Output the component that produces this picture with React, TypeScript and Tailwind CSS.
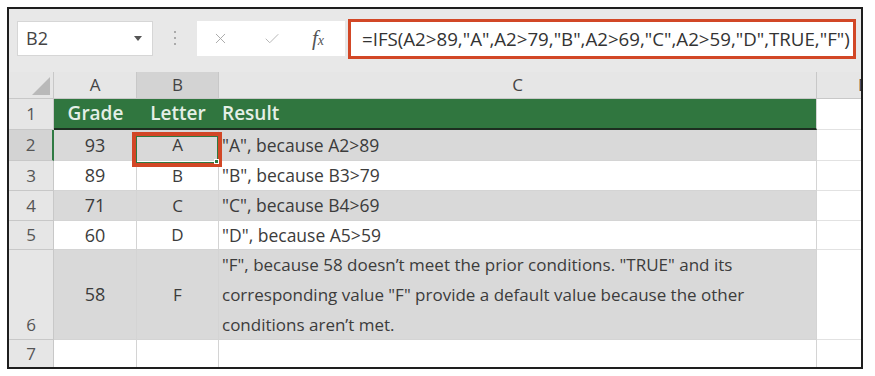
import { X, Check } from 'lucide-react'

const cols = ['A', 'B', 'C']

interface Row {
  n: number
  h: string
  grade: string
  letter: string
  result: string
  band: boolean
}

const rows: Row[] = [
  { n: 2, h: 'h-[31px]', grade: '93', letter: 'A', result: '"A", because A2>89', band: true },
  { n: 3, h: 'h-[30px]', grade: '89', letter: 'B', result: '"B", because B3>79', band: false },
  { n: 4, h: 'h-[30px]', grade: '71', letter: 'C', result: '"C", because B4>69', band: true },
  { n: 5, h: 'h-[29px]', grade: '60', letter: 'D', result: '"D", because A5>59', band: false },
]

const sixth =
  '"F", because 58 doesn\u2019t meet the prior conditions. "TRUE" and its corresponding value "F" provide a default value because the other conditions aren\u2019t met.'

export default function App() {
  return (
    <div className="w-[875px] h-[376px] bg-white p-[7px]">
      <div className="w-[856px] h-[362px] border-2 border-[#1e1e1e] bg-[#e8e8e8] flex flex-col overflow-hidden font-['Open_Sans',sans-serif] text-[17px] text-[#3c3c3c]">
        {/* formula bar */}
        <div className="h-[63px] shrink-0 flex items-start pl-[8px] pt-[11px]">
          <div className="w-[136px] h-[35px] mt-[1px] bg-white border border-[#d6d6d6] flex items-center justify-between pl-[8px] pr-[10px]">
            <span className="text-[18px] text-[#444]">B2</span>
            <svg width="8" height="5" viewBox="0 0 8 5">
              <polygon points="0,0 8,0 4,5" fill="#555" />
            </svg>
          </div>
          <div className="w-[44px] h-[35px] flex flex-col items-center justify-center gap-[4px]">
            <span className="w-[2px] h-[2px] bg-[#aaa]" />
            <span className="w-[2px] h-[2px] bg-[#aaa]" />
            <span className="w-[2px] h-[2px] bg-[#aaa]" />
          </div>
          <div className="w-[148px] h-[35px] mt-[1px] bg-white flex items-center">
            <X size={17} strokeWidth={1.3} className="ml-[15px] text-[#a5a5a5]" />
            <Check size={18} strokeWidth={1.3} className="ml-[34px] text-[#b5b5b5]" />
            <span className="ml-[31px] font-['Liberation_Serif',serif] italic text-[21px] text-[#555] leading-none">
              f<span className="text-[14px]">x</span>
            </span>
          </div>
          <div className="ml-[3px] w-[508px] h-[40px] -mt-[1px] bg-white border-[3px] border-[#d24726] flex items-center pl-[11px] text-[18.7px] text-[#333] whitespace-nowrap">
            =IFS(A2&gt;89,"A",A2&gt;79,"B",A2&gt;69,"C",A2&gt;59,"D",TRUE,"F")
          </div>
        </div>

        {/* sheet */}
        <div className="grid grid-cols-[45px_83px_82px_598px_44px]">
          {/* column headers */}
          <div className="h-[27px] bg-[#e6e6e6] border-r border-b border-[#c8c8c8] flex items-end justify-end pr-[3px] pb-[3px]">
            <svg width="18" height="18" viewBox="0 0 18 18">
              <polygon points="18,0 18,18 0,18" fill="#b9b9b9" />
            </svg>
          </div>
          {cols.map(c => (
            <div
              key={c}
              className={
                c === 'B'
                  ? 'h-[27px] bg-[#d3d3d3] border-r border-b border-[#c8c8c8] flex items-center justify-center text-[#444]'
                  : 'h-[27px] bg-[#e6e6e6] border-r border-b border-[#c8c8c8] flex items-center justify-center text-[#444]'
              }
            >
              {c}
            </div>
          ))}
          <div className="h-[27px] bg-[#e6e6e6] border-b border-[#c8c8c8] overflow-hidden pl-[41px] flex items-center text-[#444]">
            D
          </div>

          {/* row 1 */}
          <div className="h-[31px] bg-[#e6e6e6] border-r border-b border-[#c8c8c8] flex items-center justify-center text-[#555]">1</div>
          <div className="h-[31px] bg-[#30763f] border-b-2 border-[#1c2e20] flex items-center justify-center text-[19px] font-semibold text-[#e4efe6]">Grade</div>
          <div className="h-[31px] bg-[#30763f] border-b-2 border-[#1c2e20] flex items-center justify-center text-[19px] font-semibold text-[#e4efe6]">Letter</div>
          <div className="h-[31px] bg-[#30763f] border-b-2 border-[#1c2e20] border-r border-r-[#d4d4d4] flex items-center pl-[3px] text-[19px] font-semibold text-[#e4efe6]">Result</div>
          <div className="h-[31px] bg-white border-b border-[#e2e2e2]" />

          {/* rows 2-5 */}
          {rows.map(r => {
            const bg = r.band ? 'bg-[#d9d9d9]' : 'bg-white'
            const head =
              r.n === 2
                ? 'bg-[#d3d3d3] border-r-2 border-r-[#2f7a43] border-b border-b-[#c8c8c8] text-[#555]'
                : 'bg-[#e6e6e6] border-r border-b border-[#c8c8c8] text-[#555]'
            return (
              <div key={r.n} className="contents">
                <div className={`${r.h} ${head} flex items-center justify-center`}>{r.n}</div>
                <div className={`${r.h} ${bg} border-r border-b border-[#d4d4d4] flex items-center justify-center text-[18px]`}>{r.grade}</div>
                <div className={`${r.h} ${bg} border-r border-b border-[#d4d4d4] flex items-center justify-center relative`}>
                  {r.letter}
                  {r.n === 2 && (
                    <div className="absolute left-[-5px] top-[2px] w-[90px] h-[35px] border-[4px] border-[#d24726] z-10">
                      <div className="w-full h-full border border-[#2f7a43]" />
                      <div className="absolute right-[-1px] bottom-[-1px] w-[5px] h-[5px] bg-[#2f7a43] border border-white" />
                    </div>
                  )}
                </div>
                <div className={`${r.h} ${bg} border-r border-b border-[#d4d4d4] flex items-center pl-[3px] text-[17.5px]`}>{r.result}</div>
                <div className={`${r.h} bg-white border-b border-[#e2e2e2]`} />
              </div>
            )
          })}

          {/* row 6 */}
          <div className="h-[90px] bg-[#e6e6e6] border-r border-b border-[#c8c8c8] flex items-end justify-center pb-[2px] text-[#555]">6</div>
          <div className="h-[90px] bg-[#d9d9d9] border-r border-b border-[#d4d4d4] flex items-center justify-center text-[18px]">58</div>
          <div className="h-[90px] bg-[#d9d9d9] border-r border-b border-[#d4d4d4] flex items-center justify-center">F</div>
          <div className="h-[90px] bg-[#d9d9d9] border-r border-b border-[#d4d4d4] flex items-center pl-[3px] pr-[40px] leading-[30px]">{sixth}</div>
          <div className="h-[90px] bg-white border-b border-[#e2e2e2]" />

          {/* row 7 */}
          <div className="h-[27px] bg-[#e6e6e6] border-r border-[#c8c8c8] flex items-center justify-center text-[#555]">7</div>
          <div className="h-[27px] bg-white border-r border-[#d4d4d4]" />
          <div className="h-[27px] bg-white border-r border-[#d4d4d4]" />
          <div className="h-[27px] bg-white border-r border-[#d4d4d4]" />
          <div className="h-[27px] bg-white" />
        </div>
      </div>
    </div>
  )
}
